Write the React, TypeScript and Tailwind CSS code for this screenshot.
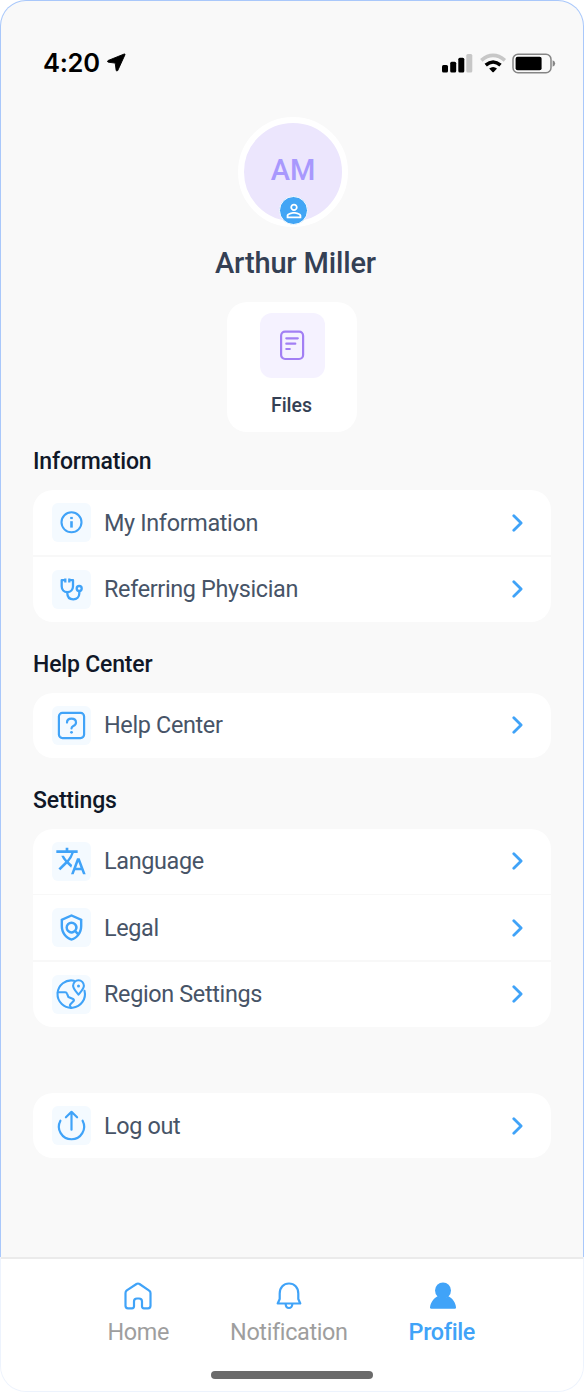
import React from "react";
import { MdTranslate, MdOutlinePolicy, MdPersonOutline } from "react-icons/md";

const BLUE = "#40a3f8";

function InfoIcon() {
  return (
    <svg width="39" height="39" viewBox="0 0 39 39" fill="none" stroke={BLUE} strokeWidth="2.1">
      <circle cx="19.5" cy="19.3" r="10" />
      <path d="M19.5 18.2v6.4" strokeWidth="2.6" />
      <path d="M19.5 13.9v2.2" strokeWidth="2.6" />
    </svg>
  );
}

function StethoscopeIcon() {
  return (
    <svg width="39" height="39" viewBox="0 0 39 39" fill="none" stroke={BLUE} strokeWidth="2.3" strokeLinejoin="round">
      <path d="M13.3 8.4v4M17.3 8.4v4M13.3 10.2H9.7v6c0 3.500 2.300 5.900 5.600 5.900s5.700-2.400 5.700-5.900v-6h-3.700" />
      <path d="M15.300 22.100v.9c0 3.900 2.300 6.300 6 6.300 3.600 0 6-2.300 6-5.700v-2.400" />
      <circle cx="27.200" cy="18.500" r="2.500" />
    </svg>
  );
}

function HelpIcon() {
  return (
    <svg width="39" height="39" viewBox="0 0 39 39" fill="none" stroke={BLUE} strokeWidth="2.2" strokeLinecap="round" strokeLinejoin="round">
      <rect x="6.900" y="6.900" width="25.200" height="25.200" rx="3.500" />
      <path d="M15 16.600c0-2.400 1.800-4 4.500-4 2.600 0 4.500 1.500 4.500 3.900 0 2.100-1.500 3-2.700 3.600-1.200.6-1.800 1-1.800 2.300" />
      <circle cx="19.500" cy="26.300" r="1.400" fill={BLUE} stroke="none" />
    </svg>
  );
}

function RegionIcon() {
  return (
    <svg width="39" height="39" viewBox="0 0 39 39" fill="none" stroke={BLUE} strokeWidth="2.1" strokeLinecap="round" strokeLinejoin="round">
      <path d="M22 5.700a13.700 13.700 0 1 0 10.500 10" />
      <path d="M26.500 19.600c-2.800-3.400-5.400-6.100-5.400-8.900a5.400 5.400 0 0 1 10.800 0c0 2.800-2.600 5.500-5.400 8.900z" />
      <circle cx="26.500" cy="10.900" r="1.500" fill={BLUE} stroke="none" />
      <path d="M5.800 17.300h7.400c1 0 1.500.5 1.800 1.300l1.400 3.400 4.700 2c.9.500 1.100 1.300.5 2.100l-3.200 3.100c-.6.600-.7 1.200-.3 1.900l.9 1.600" />
    </svg>
  );
}

function LogoutIcon() {
  return (
    <svg width="39" height="39" viewBox="0 0 39 39" fill="none" stroke={BLUE} strokeWidth="2.200" strokeLinecap="round" strokeLinejoin="round">
      <path d="M19.500 23.700V6M13.900 11.300l5.600-5.500 5.600 5.500" />
      <path d="M8.400 14.700a12.600 12.600 0 1 0 22.200 0" />
    </svg>
  );
}

function Row({ icon, label }: { icon: React.ReactNode; label: string }) {
  return (
    <button className="flex h-[65px] w-full items-center pl-[19px] pr-[28px] text-left">
      <span className="flex size-[39px] shrink-0 items-center justify-center rounded-[6px] bg-[#f4faff] text-[#40a3f8]">
        {icon}
      </span>
      <span className="ml-[13px] flex-1 pt-[0.500px] text-[23.400px] leading-7 tracking-[-0.340px] text-[#475467]">{label}</span>
      <svg width="13" height="20" viewBox="0 0 13 20" fill="none" stroke={BLUE} strokeWidth="2.800" strokeLinecap="round" strokeLinejoin="round">
        <path d="M3.800 2.700l7.300 7.300-7.300 7.300" />
      </svg>
    </button>
  );
}

function Card({ children }: { children: React.ReactNode }) {
  return <div className="overflow-hidden rounded-[20px] bg-white">{children}</div>;
}

function Divider() {
  return <div className="h-[1.500px] bg-[#f8f8f8]" />;
}

function Heading({ children }: { children: React.ReactNode }) {
  return <h2 className="h-7 text-[23px] font-medium leading-7 tracking-[-0.180px] text-[#101828]">{children}</h2>;
}

function StatusBar() {
  return (
    <div className="flex h-[26px] items-center justify-between pl-[42px] pr-[26px] text-black">
      <div className="flex items-center">
        <span className="font-['Inter'] text-[25.500px] font-semibold leading-[26px] tracking-[-0.250px]">4:20</span>
        <svg className="ml-[7px] -mt-px" width="19" height="19" viewBox="0 0 19 19" fill="black" stroke="black" strokeWidth="0.900" strokeLinejoin="round">
          <path d="M17.200 1 1.100 7.500c-.9.500-.7 1.500.3 1.700l6.800.9.900 7c.1 1.100 1.200 1.200 1.700.3L17.900 1.900c.3-.7-.1-1.200-.7-.9z" />
        </svg>
      </div>
      <svg className="mt-px" width="115" height="24" viewBox="0 0 115 24" fill="black">
        <rect x="0" y="13" width="6" height="7.500" rx="1.500" />
        <rect x="8.200" y="9.700" width="6" height="10.800" rx="1.500" />
        <rect x="16.300" y="5.700" width="6" height="14.800" rx="1.500" />
        <rect x="24.300" y="2" width="6" height="18.500" rx="1.500" fill="#c7c7c7" />
        <g fill="none" strokeWidth="3.600">
          <path d="M39.300 8.400Q51.100-1.500 62.900 8.400" stroke="#c7c7c7" />
          <path d="M43.700 13.100q7.400-6.200 14.800 0" stroke="black" />
        </g>
        <path d="M47.200 16.600q3.900-3.200 7.800 0l-3.200 3.300q-.7.700-1.400 0z" />
        <rect x="71" y="2.200" width="38" height="18.500" rx="5" fill="none" stroke="#858585" strokeWidth="1.500" />
        <rect x="73.600" y="4.800" width="26" height="13.500" rx="2" />
        <path d="M110.600 8.300q2.600 1 2.600 3.200T110.600 14.700z" fill="#858585" />
      </svg>
    </div>
  );
}

function NavItem({ icon, label, active = false }: { icon: React.ReactNode; label: string; active?: boolean }) {
  return (
    <button className={active ? "flex flex-col items-center font-medium text-[#40a3f8]" : "flex flex-col items-center text-[#9e9e9e]"}>
      {icon}
      <span className="mt-[8px] text-[23.400px] leading-7 tracking-[-0.350px]">{label}</span>
    </button>
  );
}

export default function App() {
  return (
    <div className="h-[1392px] w-[584px] bg-white font-['Roboto',sans-serif]">
      <div className="h-full rounded-[26px] bg-[linear-gradient(#a9c8fb_1257px,#edf3fd_1257px)] p-px">
        <div className="flex h-full flex-col overflow-hidden rounded-[25px] bg-[#f9f9f9]">
          <div className="h-[49px]" />
          <StatusBar />
          <main className="flex-1 px-8">
            <div className="flex flex-col items-center pt-[41px]">
              <div className="relative ml-[2px] flex size-[110px] items-center justify-center rounded-full border-[6px] border-white bg-[#ece6fd]">
                <span className="-mt-0.5 text-[29px] font-medium text-[#a898fd]">AM</span>
                <span className="absolute bottom-[-4px] left-[35px] flex size-[29px] items-center justify-center rounded-full border-[1.500px] border-white bg-[#42a5f5] text-white">
                  <MdPersonOutline size={22} />
                </span>
              </div>
              <h1 className="ml-[7px] mt-[18px] text-[29px] font-medium leading-9 tracking-[-0.150px] text-[#344054]">Arthur Miller</h1>
              <div className="mt-[21px] flex h-[130px] w-[130px] flex-col items-center rounded-[20px] bg-white pt-[11px]">
                <div className="flex size-[65px] items-center justify-center rounded-[12px] bg-[#f5f2ff]">
                  <svg width="25" height="31" viewBox="0 0 25 31" fill="none" stroke="#a27ff4" strokeWidth="2.200" strokeLinecap="round">
                    <rect x="1.100" y="1.700" width="22" height="27.300" rx="4" />
                    <path d="M6.300 8.300h11.500M6.300 13.700h9M6.300 19h3.500" />
                  </svg>
                </div>
                <span className="mt-4 pr-px text-[19.500px] font-medium leading-6 text-[#344054]">Files</span>
              </div>
            </div>
            <section className="mt-4">
              <Heading>Information</Heading>
              <div className="h-[14px]" />
              <Card>
                <Row icon={<InfoIcon />} label="My Information" />
                <Divider />
                <Row icon={<StethoscopeIcon />} label="Referring Physician" />
              </Card>
            </section>
            <section className="mt-[29px]">
              <Heading>Help Center</Heading>
              <div className="h-[14px]" />
              <Card>
                <Row icon={<HelpIcon />} label="Help Center" />
              </Card>
            </section>
            <section className="mt-[29px]">
              <Heading>Settings</Heading>
              <div className="h-[14px]" />
              <Card>
                <Row icon={<MdTranslate size={32} className="mr-px" />} label="Language" />
                <Divider />
                <Row icon={<MdOutlinePolicy size={29} />} label="Legal" />
                <Divider />
                <Row icon={<RegionIcon />} label="Region Settings" />
              </Card>
            </section>
            <section className="mt-[66.500px]">
              <Card>
                <Row icon={<LogoutIcon />} label="Log out" />
              </Card>
            </section>
          </main>
          <nav className="flex h-[134px] shrink-0 flex-col items-center border-t-2 border-[#ebebeb] bg-white pt-[23px]">
            <div className="flex w-full items-start gap-[61px] pl-[106.500px]">
              <NavItem
                label="Home"
                icon={
                  <svg width="28" height="28" viewBox="0 0 28 28" fill="none" stroke={BLUE} strokeWidth="2.200" strokeLinejoin="round">
                    <path d="M4 26.300H8q2 0 2-2v-4.800q0-3 3-3h2q3 0 3 3v4.800q0 2 2 2h4q2.500 0 2.500-2.500V11q0-1.500-1.300-2.300L15.500 2q-1.500-1-3 0L2.800 8.400Q1.500 9.500 1.500 11v12.800q0 2.500 2.500 2.500z" />
                  </svg>
                }
              />
              <NavItem
                label="Notification"
                icon={
                  <svg width="28" height="28" viewBox="0 0 28 28" fill="none" stroke={BLUE} strokeWidth="2.200" strokeLinejoin="round">
                    <path d="M4.700 11.500C4.700 5.300 8.600 1.500 14 1.500s9.300 3.800 9.300 10v5.500l2 4.500H2.700l2-4.500z" />
                    <path d="M10.700 22c0 5.300 6.600 5.300 6.600 0" />
                  </svg>
                }
              />
              <NavItem
                active
                label="Profile"
                icon={
                  <svg className="mr-[-3px]" width="28" height="28" viewBox="0 0 28 28" fill={BLUE}>
                    <circle cx="14" cy="8.500" r="8" />
                    <path d="M8.500 14.300Q14 17.500 19.500 14.300c4.200 2.300 7.300 6.600 7.500 11.300 0 .8-.3 1.200-1.200 1.200H2.200c-1 0-1.300-.4-1.200-1.200.5-4.900 3.400-9.100 7.500-11.300z" />
                  </svg>
                }
              />
            </div>
            <div className="mt-[25px] h-2 w-[162px] shrink-0 rounded-full bg-[#6b6b6b]" />
          </nav>
        </div>
      </div>
    </div>
  );
}
